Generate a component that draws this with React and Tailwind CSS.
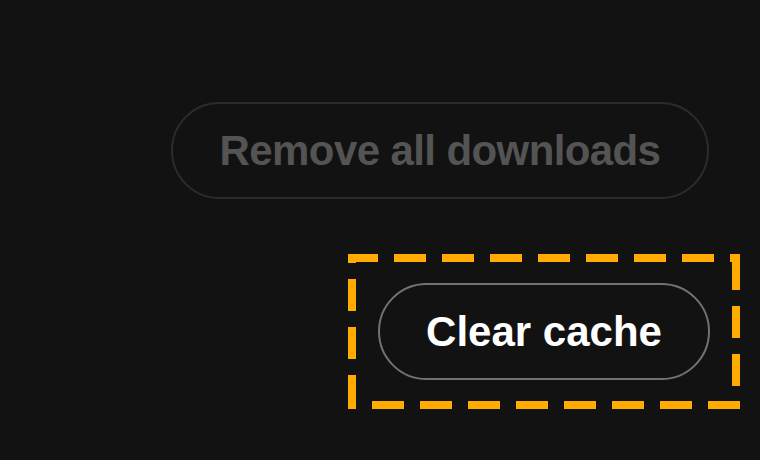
import React from "react";

function DashedFrame() {
  return (
    <svg
      className="pointer-events-none absolute left-0 top-0"
      width="392"
      height="155"
      viewBox="0 0 392 155"
      fill="none"
    >
      <g stroke="#ffab00" strokeWidth="8" strokeDasharray="32 16">
        <line x1="0" y1="4" x2="392" y2="4" strokeDashoffset="2" />
        <line x1="388" y1="0" x2="388" y2="155" strokeDashoffset="44" />
        <line x1="0" y1="151" x2="392" y2="151" strokeDashoffset="24" />
        <line x1="4" y1="0" x2="4" y2="155" strokeDashoffset="23" />
      </g>
    </svg>
  );
}

export default function App() {
  return (
    <div
      className="flex h-[460px] w-full flex-col items-end bg-[#121212] pr-[20px] pt-[102px]"
      style={{ fontFamily: '"Liberation Sans", Arial, sans-serif' }}
    >
      <button
        disabled
        className="mr-[31px] flex h-[97px] w-[538px] items-center justify-center rounded-full border-2 border-[#2c2c2c] bg-transparent text-[42px] font-bold tracking-[-0.6px] text-[#545454]"
      >
        Remove all downloads
      </button>
      <div className="relative mt-[55px] h-[155px] w-[392px] px-[30px] py-[29px]">
        <button className="flex h-[97px] w-[332px] items-center justify-center rounded-full border-2 border-[#727272] bg-transparent text-[42px] font-bold text-white">
          Clear cache
        </button>
        <DashedFrame />
      </div>
    </div>
  );
}
